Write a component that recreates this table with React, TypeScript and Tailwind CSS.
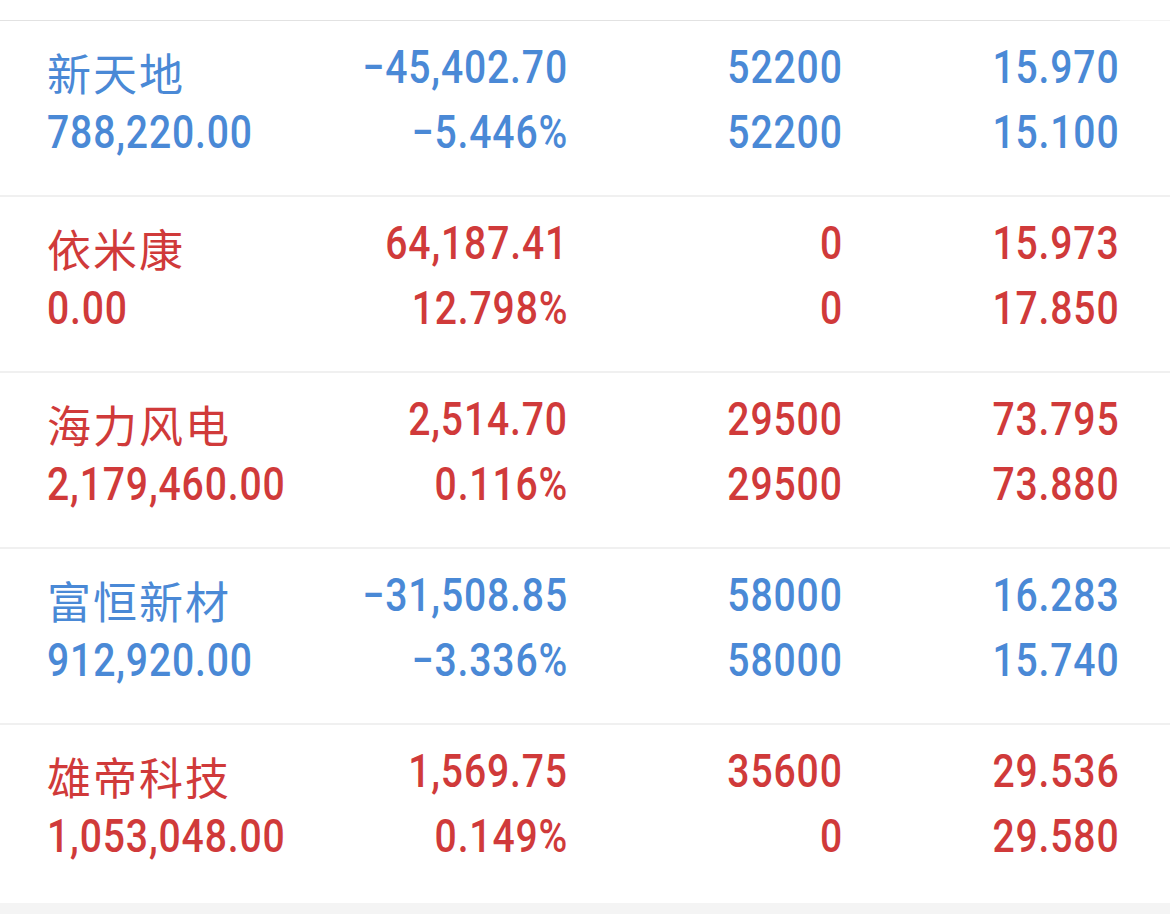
import React from "react";

type Row = {
  name: string;
  amount: string;
  pl: string;
  pct: string;
  q1: string;
  q2: string;
  p1: string;
  p2: string;
  up: boolean;
};

const rows: Row[] = [
  { name: "新天地", amount: "788,220.00", pl: "-45,402.70", pct: "-5.446%", q1: "52200", q2: "52200", p1: "15.970", p2: "15.100", up: false },
  { name: "依米康", amount: "0.00", pl: "64,187.41", pct: "12.798%", q1: "0", q2: "0", p1: "15.973", p2: "17.850", up: true },
  { name: "海力风电", amount: "2,179,460.00", pl: "2,514.70", pct: "0.116%", q1: "29500", q2: "29500", p1: "73.795", p2: "73.880", up: true },
  { name: "富恒新材", amount: "912,920.00", pl: "-31,508.85", pct: "-3.336%", q1: "58000", q2: "58000", p1: "16.283", p2: "15.740", up: false },
  { name: "雄帝科技", amount: "1,053,048.00", pl: "1,569.75", pct: "0.149%", q1: "35600", q2: "0", p1: "29.536", p2: "29.580", up: true },
];

const numFont = {
  fontFamily: 'Roboto, "Noto Sans CJK SC", sans-serif',
};
const cjkFont = {
  fontFamily: '"Noto Sans CJK SC", sans-serif',
};

function fmt(s: string) {
  return s.replace(/^-/, "\u2212");
}

function NumR({ v }: { v: string }) {
  return (
    <div className="h-[65px] flex items-center justify-end">
      <span className="inline-block origin-right scale-x-[0.85] whitespace-nowrap tracking-[1px]">{fmt(v)}</span>
    </div>
  );
}

function RowView({ r, last }: { r: Row; last: boolean }) {
  const color = r.up ? "text-[#d03a3a]" : "text-[#4a89d6]";
  return (
    <div
      className={`flex pl-[47px] pr-[50px] pt-[14px] ${last ? "pb-[34px]" : "pb-[30px] border-b-2 border-[#f0f0f0]"} ${color}`}
    >
      <div className="w-[301px] flex flex-col text-left">
        <div className="h-[65px] flex items-center pt-[8px] text-[44px] tracking-[2px]" style={cjkFont}>
          {r.name}
        </div>
        <div className="h-[65px] flex items-center text-[46px] font-medium" style={numFont}>
          <span className="inline-block origin-left scale-x-[0.85] whitespace-nowrap tracking-[1px]">{r.amount}</span>
        </div>
      </div>
      <div className="w-[220px] flex flex-col text-[46px] font-medium" style={numFont}>
        <NumR v={r.pl} />
        <NumR v={r.pct} />
      </div>
      <div className="w-[275px] flex flex-col text-[46px] font-medium" style={numFont}>
        <NumR v={r.q1} />
        <NumR v={r.q2} />
      </div>
      <div className="w-[277px] flex flex-col text-[46px] font-medium" style={numFont}>
        <NumR v={r.p1} />
        <NumR v={r.p2} />
      </div>
    </div>
  );
}

export default function App() {
  return (
    <div className="w-[1170px] h-[914px] bg-white overflow-hidden flex flex-col">
      <div className="h-[20px] shrink-0" />
      <div className="h-px shrink-0 flex">
        <div className="w-[1120px] bg-[#e2e2e2]" />
        <div className="flex-1 bg-[#f3f3f3]" />
      </div>
      {rows.map((r, i) => (
        <RowView key={i} r={r} last={i === rows.length - 1} />
      ))}
      <div className="flex-1 bg-[#f4f4f4]" />
    </div>
  );
}
